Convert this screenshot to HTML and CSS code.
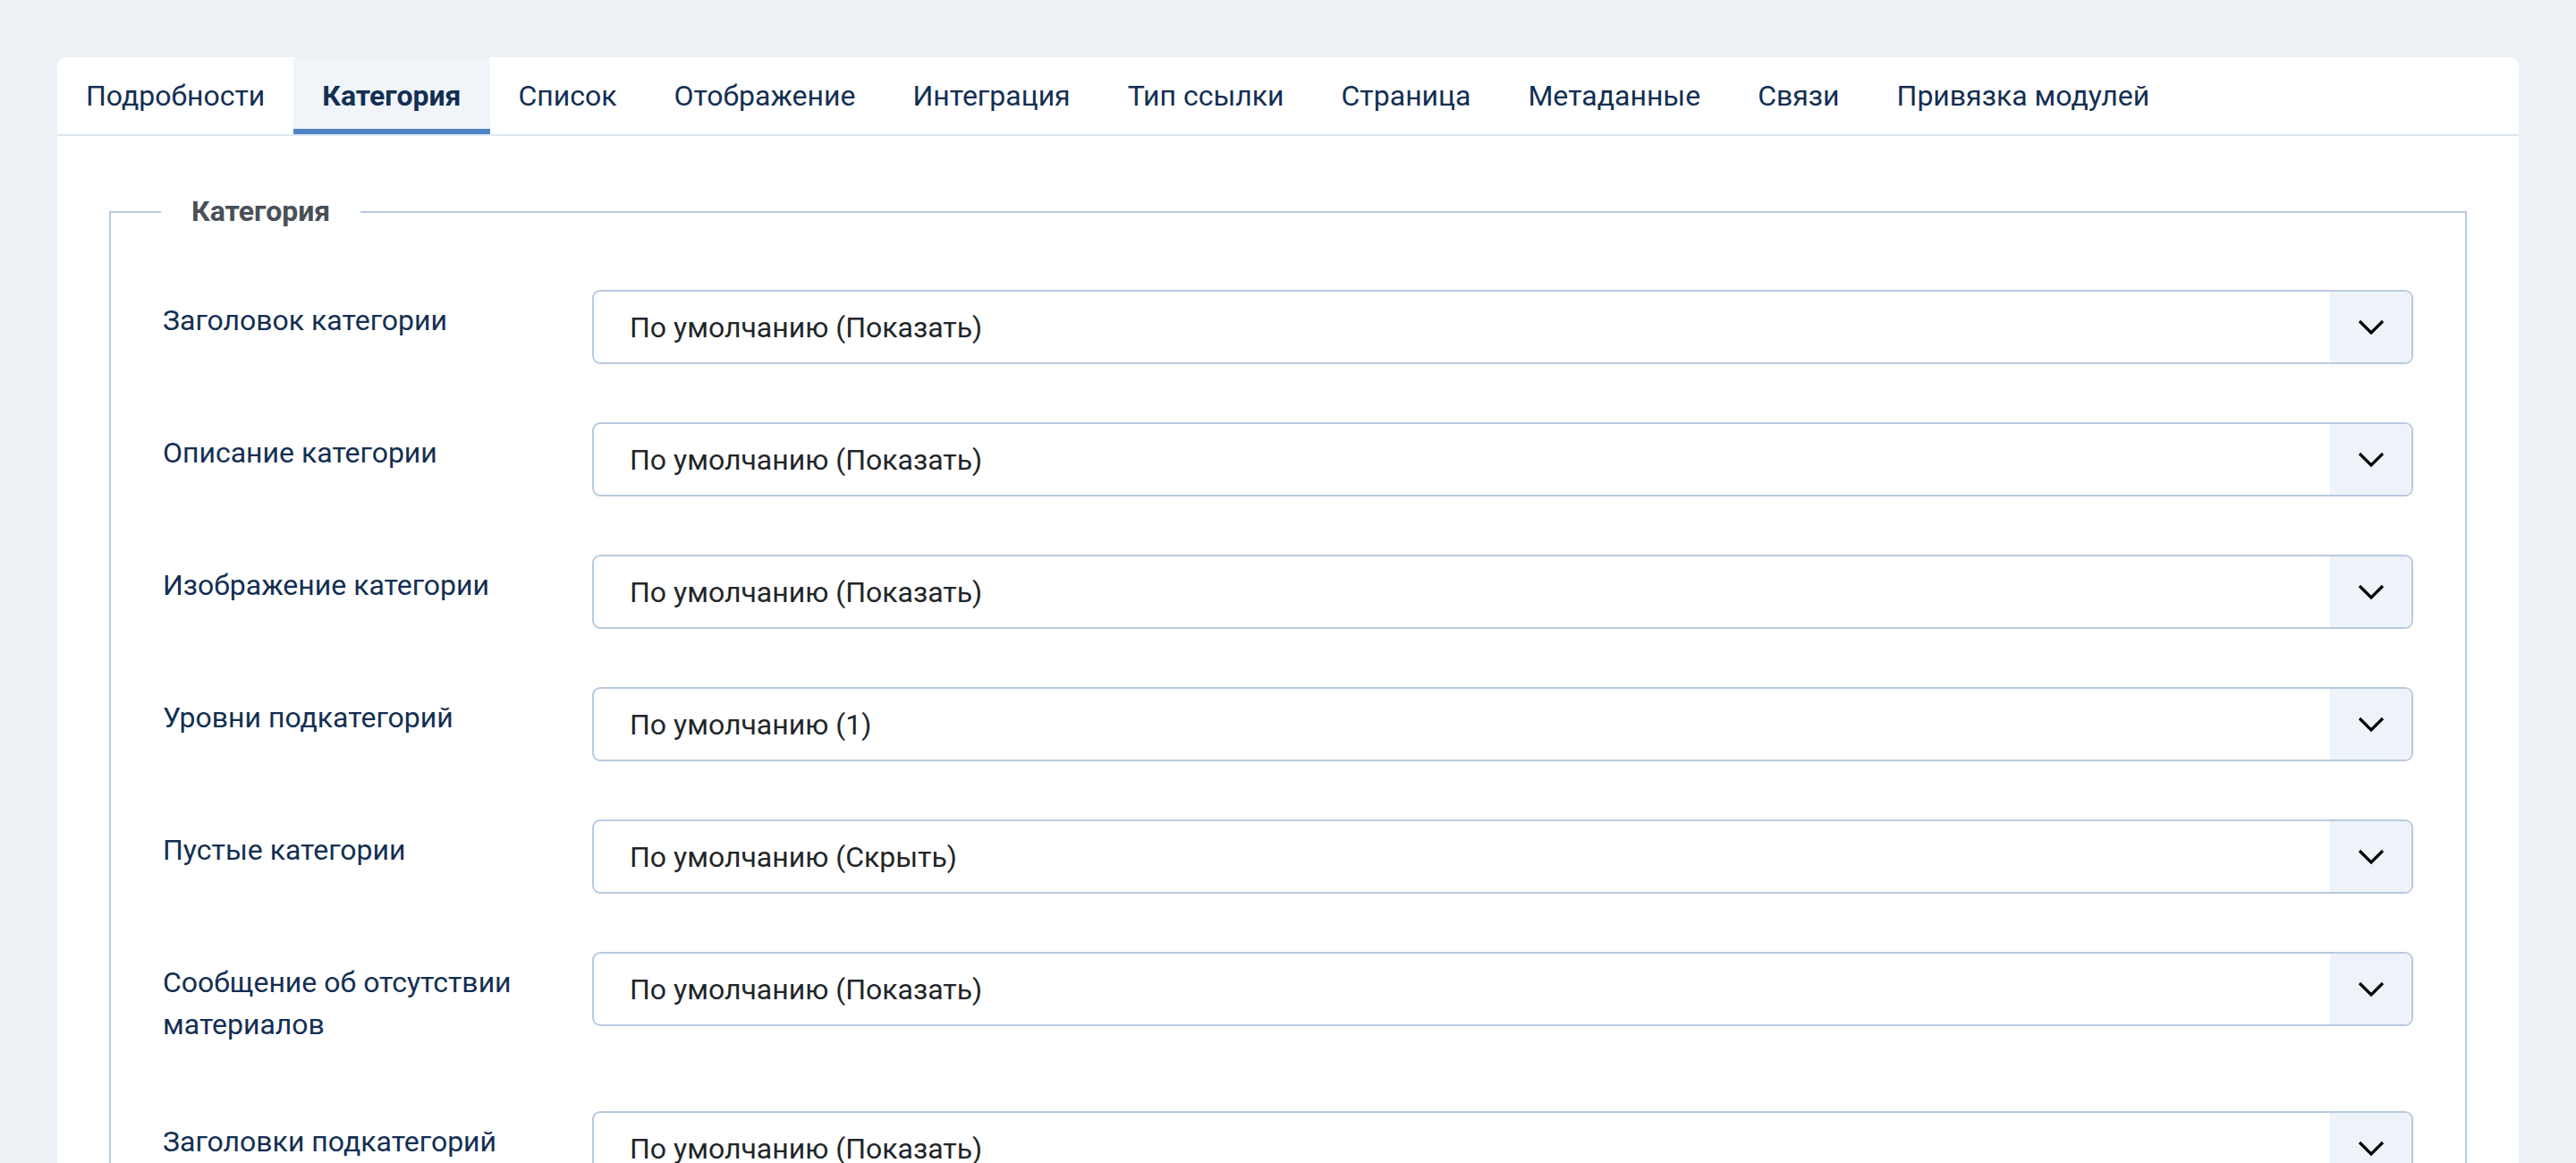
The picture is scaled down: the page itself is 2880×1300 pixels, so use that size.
FILE: index.html
```html
<!DOCTYPE html>
<html lang="ru">
<head>
    <meta charset="UTF-8">
    <title>Пункт меню: Категория</title>
    <link rel="stylesheet" href="styles.css">
</head>
<body>
    <div class="card">
        <!-- вкладки -->
        <ul class="tabs">
            <li class="tab">Подробности</li>
            <li class="tab active">Категория</li>
            <li class="tab">Список</li>
            <li class="tab">Отображение</li>
            <li class="tab">Интеграция</li>
            <li class="tab">Тип ссылки</li>
            <li class="tab">Страница</li>
            <li class="tab">Метаданные</li>
            <li class="tab">Связи</li>
            <li class="tab">Привязка модулей</li>
        </ul>

        <div class="card-body">
            <fieldset class="options">
                <legend>Категория</legend>

                <div class="control-group">
                    <div class="control-label">Заголовок категории</div>
                    <div class="select-box">
                        <span class="select-value">По умолчанию (Показать)</span>
                        <span class="select-arrow"><svg width="30" height="18" viewBox="0 0 30 18"><path d="M2 2 L15 15 L28 2" fill="none" stroke="#000" stroke-width="3.2"/></svg></span>
                    </div>
                </div>

                <div class="control-group">
                    <div class="control-label">Описание категории</div>
                    <div class="select-box">
                        <span class="select-value">По умолчанию (Показать)</span>
                        <span class="select-arrow"><svg width="30" height="18" viewBox="0 0 30 18"><path d="M2 2 L15 15 L28 2" fill="none" stroke="#000" stroke-width="3.2"/></svg></span>
                    </div>
                </div>

                <div class="control-group">
                    <div class="control-label">Изображение категории</div>
                    <div class="select-box">
                        <span class="select-value">По умолчанию (Показать)</span>
                        <span class="select-arrow"><svg width="30" height="18" viewBox="0 0 30 18"><path d="M2 2 L15 15 L28 2" fill="none" stroke="#000" stroke-width="3.2"/></svg></span>
                    </div>
                </div>

                <div class="control-group">
                    <div class="control-label">Уровни подкатегорий</div>
                    <div class="select-box">
                        <span class="select-value">По умолчанию (1)</span>
                        <span class="select-arrow"><svg width="30" height="18" viewBox="0 0 30 18"><path d="M2 2 L15 15 L28 2" fill="none" stroke="#000" stroke-width="3.2"/></svg></span>
                    </div>
                </div>

                <div class="control-group">
                    <div class="control-label">Пустые категории</div>
                    <div class="select-box">
                        <span class="select-value">По умолчанию (Скрыть)</span>
                        <span class="select-arrow"><svg width="30" height="18" viewBox="0 0 30 18"><path d="M2 2 L15 15 L28 2" fill="none" stroke="#000" stroke-width="3.2"/></svg></span>
                    </div>
                </div>

                <div class="control-group">
                    <div class="control-label">Сообщение об отсутствии материалов</div>
                    <div class="select-box">
                        <span class="select-value">По умолчанию (Показать)</span>
                        <span class="select-arrow"><svg width="30" height="18" viewBox="0 0 30 18"><path d="M2 2 L15 15 L28 2" fill="none" stroke="#000" stroke-width="3.2"/></svg></span>
                    </div>
                </div>

                <div class="control-group">
                    <div class="control-label">Заголовки подкатегорий</div>
                    <div class="select-box">
                        <span class="select-value">По умолчанию (Показать)</span>
                        <span class="select-arrow"><svg width="30" height="18" viewBox="0 0 30 18"><path d="M2 2 L15 15 L28 2" fill="none" stroke="#000" stroke-width="3.2"/></svg></span>
                    </div>
                </div>
            </fieldset>
        </div>
    </div>
</body>
</html>
```

FILE: styles.css
```css
* {
    margin: 0;
    padding: 0;
    box-sizing: border-box;
    font-family: 'Roboto', 'Liberation Sans', sans-serif;
}

body {
    background-color: #edf1f6;
    padding: 64px 64px 0;
    overflow: hidden;
}

.card {
    background-color: #fff;
    border-radius: 10px 10px 0 0;
}

/* вкладки */
.tabs {
    list-style: none;
    display: flex;
    border-bottom: 2px solid #dde6f1;
}

.tab {
    padding: 0 32px;
    height: 86px;
    line-height: 86px;
    font-size: 32px;
    color: #132f53;
    white-space: nowrap;
}

.tab.active {
    background-color: #f1f5fa;
    font-weight: bold;
    box-shadow: inset 0 -6px 0 #5083c4;
}

.card-body {
    padding: 62px 58px 0;
}

.options {
    border: 2px solid #b9cadf;
    padding: 65px 58px 0;
}

.options legend {
    margin-left: -2px;
    padding: 0 34px;
    font-size: 32px;
    line-height: 45px;
    font-weight: bold;
    color: #495057;
}

/* строки формы */
.control-group {
    display: grid;
    grid-template-columns: 480px 1fr;
    align-items: start;
    margin-bottom: 65px;
}

.control-label {
    padding: 11px 60px 8px 0;
    font-size: 32px;
    line-height: 47px;
    color: #132f53;
}

.select-box {
    display: flex;
    height: 83px;
    border: 2px solid #b9cadf;
    border-radius: 9px;
    overflow: hidden;
}

.select-value {
    flex: 1;
    display: flex;
    align-items: center;
    padding-left: 40px;
    font-size: 32px;
    color: #22262a;
}

.select-arrow {
    width: 91px;
    display: flex;
    align-items: center;
    justify-content: center;
    background-color: #eef3fa;
}
```
